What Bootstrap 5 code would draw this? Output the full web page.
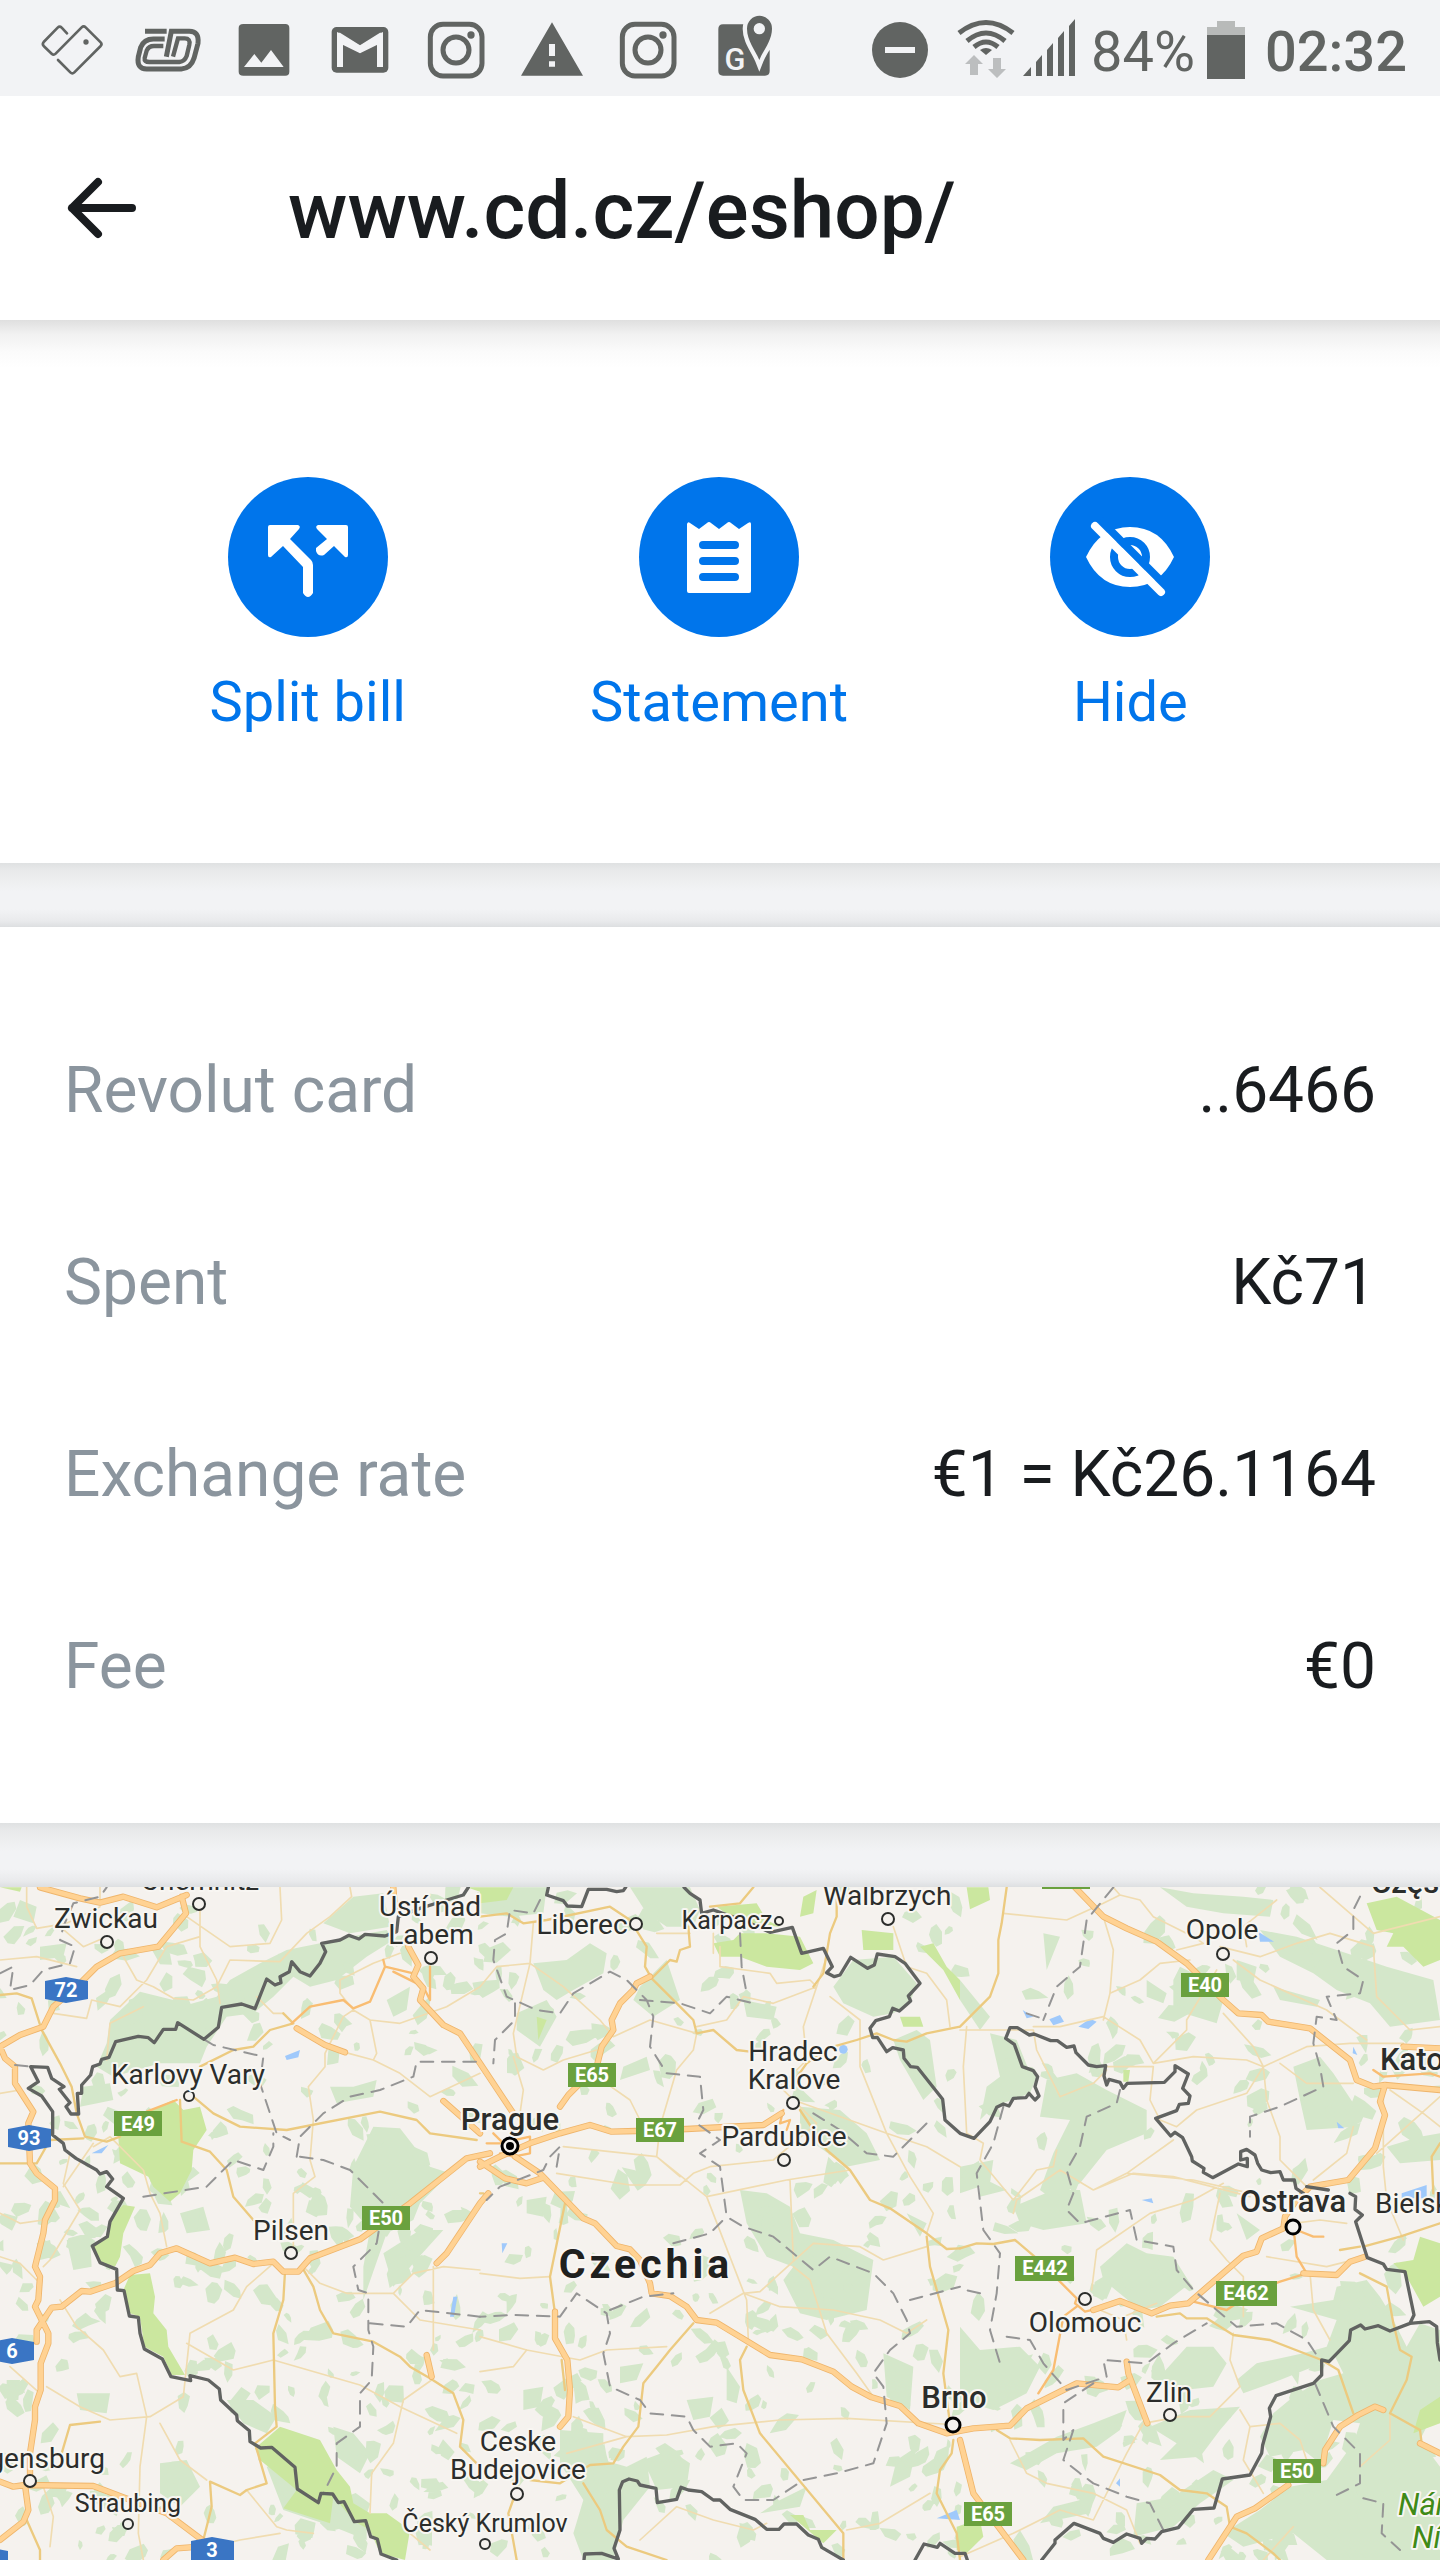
<!DOCTYPE html>
<html lang="en">
<head>
<meta charset="utf-8">
<meta name="viewport" content="width=device-width, initial-scale=1">
<title>www.cd.cz/eshop/</title>
<link href="https://cdn.jsdelivr.net/npm/bootstrap@5.3.0/dist/css/bootstrap.min.css" rel="stylesheet">
<style>
body{font-family:Roboto,"Noto Sans",sans-serif;background:#fff;color:#191c1f;overflow-x:hidden}
svg{display:block;flex-shrink:0}
.status-strip{height:96px;background:#f2f3f5;color:#616462;padding:0 33px 0 24px;font-size:56px;line-height:96px}
.status-strip svg{height:96px}
.status-strip .clock{font-weight:500}
.title-strip{height:224px;padding:0 64px;gap:144px}
.title-strip h1{font-size:80px;line-height:96px;font-weight:500;padding-top:6px}
.back-btn{color:#191c1f;width:80px}
.actions{padding:157px 104px 129px 102px;background:linear-gradient(#dfdfdf,#f1f1f1 14px,#fbfbfb 32px,#fff 48px)}
.act{font-size:56px;line-height:64px;color:#0075eb;gap:33px}
.act:hover{color:#0062c4}
.divider{height:64px;background:linear-gradient(#dfe1e2,#e9eaeb 8px,#f2f3f5 28px,#f2f3f5 46px,#e9eaec 58px,#dddfe1)}
.facts{padding:68px 64px 60px;font-size:64px;line-height:192px}
.facts dt{font-weight:400;color:#8b959e}
.map{width:100%;height:auto;background:#f5f2ee;font-family:Roboto,"Noto Sans",sans-serif}
.map path,.map polyline{stroke-linejoin:round;stroke-linecap:round}
.town text{font-size:28px;fill:#2b2d2b;text-anchor:middle;stroke:#f8f6f2;stroke-width:4px;paint-order:stroke;stroke-linejoin:round}
.town text.minor{font-size:25px}
.town text.city{font-size:31px;font-weight:500}
.town text.land{font-size:41px;font-weight:700;letter-spacing:4px;fill:#1f211f}
.town text.from{text-anchor:start}
.town text.till{text-anchor:end}
.town text.nature{font-size:31px;font-style:italic;fill:#3f8a17;text-anchor:start}
.shield text{font-size:20px;font-weight:700;fill:#fff;text-anchor:middle}
</style>
<script src="https://cdn.jsdelivr.net/npm/bootstrap@5.3.0/dist/js/bootstrap.bundle.min.js"></script>
</head>
<body>
<div class="status-strip d-flex justify-content-between">
  <div class="d-flex">
    <svg width="96" viewBox="0 0 288 288" fill="none" stroke="#616462" stroke-width="8" stroke-linecap="round" stroke-linejoin="round"><path d="M129 100 113 83Q107 77 101 83L59 126Q54 132 59 138L83 161Q89 167 95 161L173 82Q179 76 185 82L230 127Q235 132 230 138L151 217Q145 223 139 217L102 180"/><circle cx="186" cy="126" r="4" fill="#616462"/></svg>
    <svg width="96" viewBox="0 0 288 288" fill="none" stroke="#616462" stroke-width="15"><path d="M75 94H140M134 117H100Q72 117 62 142L55 170Q49 207 80 207H184Q212 206 222 175L234 130Q238 94 208 94H154L139 170"/><path d="M130 138H102Q86 138 80 152L74 174Q72 186 88 186H178Q194 184 200 168L208 134Q212 115 194 115H174L159 170" stroke-width="13"/></svg>
    <svg width="96" viewBox="0 0 288 288"><path fill="#616462" fill-rule="evenodd" d="M82 72H208Q220 72 220 84V215Q220 227 208 227H82Q68 227 68 215V84Q68 72 82 72ZM84 201H203L165 150 136 188 115 162Z"/></svg>
    <svg width="96" viewBox="0 0 288 288"><rect x="59" y="81" width="170" height="137" rx="15" fill="#616462"/><path d="M84 201V112L144 148 204 112V201" fill="none" stroke="#f2f3f5" stroke-width="18"/><path d="M75 98H84L144 136 204 98H213V126L144 160 75 126Z" fill="#f2f3f5"/></svg>
    <svg width="96" viewBox="0 0 288 288" fill="none" stroke="#616462" stroke-width="15"><rect x="67" y="73" width="155" height="155" rx="38"/><circle cx="144" cy="150" r="39"/><circle cx="189" cy="105" r="11" fill="#616462" stroke="none"/></svg>
    <svg width="96" viewBox="0 0 288 288"><path fill="#616462" fill-rule="evenodd" d="M144 67 237 227H51ZM135 132V168H153V132ZM135 184V200H153V184Z"/></svg>
    <svg width="96" viewBox="0 0 288 288" fill="none" stroke="#616462" stroke-width="15"><rect x="67" y="73" width="155" height="155" rx="38"/><circle cx="144" cy="150" r="39"/><circle cx="189" cy="105" r="11" fill="#616462" stroke="none"/></svg>
    <svg width="96" viewBox="0 0 288 288"><path d="M81 73H160L190 180 221 150V213Q221 227 207 227H81Q67 227 67 213V87Q67 73 81 73Z" fill="#616462"/><path d="M190 180C178 150 153 122 153 86A37 38 0 0 1 228 86C228 122 202 150 190 180Z" fill="#616462" stroke="#f2f3f5" stroke-width="26" paint-order="stroke"/><circle cx="190" cy="86" r="17" fill="#f2f3f5"/><text x="117" y="209" font-size="92" font-weight="500" text-anchor="middle" fill="#f2f3f5">G</text></svg>
  </div>
  <div class="d-flex">
    <svg width="58" viewBox="0 0 58 96"><circle cx="29" cy="50" r="28" fill="#616462"/><path d="M14 50H44" stroke="#f2f3f5" stroke-width="6"/></svg>
    <svg class="ms-4" width="62" viewBox="-4 0 62 96" fill="none" stroke="#616462" stroke-width="5"><path d="M2 33Q29 12 56 33M10 41Q29 25 48 41M17 47Q29 37 41 47"/><path d="M23 50Q29 46 35 50L29 55Z" fill="#616462" stroke="none"/><path d="M17 55 26 64H21V75H13V64H8ZM40 78 31 69H36V58H44V69H49Z" fill="#bcbebf" stroke="none"/></svg>
    <svg class="ms-2" width="52" viewBox="0 0 52 96" fill="#616462"><path d="M0 76 8 67V76ZM13 62 19 55V76H13ZM24 50 30 43V76H24ZM35 38 41 31V76H35ZM46 26 52 19V76H46Z"/></svg>
    <span class="ms-3 pt-1">84%</span>
    <svg class="ms-2" width="42" viewBox="-4 0 42 96"><path d="M10 21H28V27H38V36H0V27H10Z" fill="#b8bab9"/><path d="M0 35H38V79H0Z" fill="#616462"/></svg>
    <span class="clock ms-3 ps-1 pt-1">02:32</span>
  </div>
</div>
<header class="title-strip d-flex align-items-center">
  <button type="button" class="back-btn btn p-0 border-0" aria-label="Back"><svg width="80" height="64" viewBox="0 0 80 64" fill="none" stroke="currentColor" stroke-width="8" stroke-linecap="round" stroke-linejoin="round"><path d="M68 32H8M34 6 8 32 34 58"/></svg></button>
  <h1 class="mb-0">www.cd.cz/eshop/</h1>
</header>
<main>
<section class="actions">
  <div class="row g-0">
    <div class="col-4 d-flex justify-content-center"><button type="button" class="act btn p-0 border-0 d-flex flex-column align-items-center">
      <svg width="160" height="160" viewBox="0 0 160 160"><circle cx="80" cy="80" r="80" fill="#0075eb"/><path d="M42 48H70Q73 49 71 52L62 62 83 83Q85 85 85 88V116Q80 124 75 116V90L55 69 43 80Q40 81 40 78V50Q40 48 42 48ZM90 48H118Q120 48 120 50V78Q120 81 117 80L106 69 96 78Q90 80 88 74V71L99 62 89 52Q87 49 90 48Z" fill="#fff"/></svg>
      <span>Split bill</span></button></div>
    <div class="col-4 d-flex justify-content-center"><button type="button" class="act btn p-0 border-0 d-flex flex-column align-items-center">
      <svg width="160" height="160" viewBox="0 0 160 160"><circle cx="80" cy="80" r="80" fill="#0075eb"/><path d="M48 47Q49 44 51 46L60 52 68 46Q70 44 72 46L80 52 88 46Q90 44 92 46L100 52 109 46Q112 44 112 47V114Q112 116 110 116H50Q48 116 48 114Z" fill="#fff"/><path d="M64 68H96M64 84H96M64 100H96" stroke="#0075eb" stroke-width="8" stroke-linecap="round"/></svg>
      <span>Statement</span></button></div>
    <div class="col-4 d-flex justify-content-center"><button type="button" class="act btn p-0 border-0 d-flex flex-column align-items-center">
      <svg width="160" height="160" viewBox="0 0 160 160"><circle cx="80" cy="80" r="80" fill="#0075eb"/><path d="M36 80Q50 50 80 50T124 80Q110 110 80 110T36 80Z" fill="#fff"/><circle cx="80" cy="80" r="16" fill="#fff" stroke="#0075eb" stroke-width="8"/><path d="M50 43 118 111" stroke="#0075eb" stroke-width="8"/><path d="M45 49 111 115" stroke="#fff" stroke-width="8" stroke-linecap="round"/></svg>
      <span>Hide</span></button></div>
  </div>
</section>
<div class="divider"></div>
<dl class="facts m-0">
  <div class="d-flex justify-content-between"><dt>Revolut card</dt><dd class="m-0">..6466</dd></div>
  <div class="d-flex justify-content-between"><dt>Spent</dt><dd class="m-0">Kč71</dd></div>
  <div class="d-flex justify-content-between"><dt>Exchange rate</dt><dd class="m-0">€1 = Kč26.1164</dd></div>
  <div class="d-flex justify-content-between"><dt>Fee</dt><dd class="m-0">€0</dd></div>
</dl>
<div class="divider"></div>
<svg class="map" viewBox="0 0 1440 673" role="img" aria-label="Map of Czechia">
  <defs>
    <g id="hw">
      <path d="M120 262 240 295 300 308 370 290 470 322 560 285M545 290 558 340 475 440 360 460 290 500 230 560 160 620 130 680 60 705 0 740 15 775 45 800 45 850 100 935 85 970 90 1090 110 1120 165 1165 165 1200 135 1260 130 1300 105 1400 120 1430 115 1500 105 1520 145 1600 145 1630 122 1690 122 1770 105 1820 105 1860 90 1960 90 2050M110 1625 110 1590 130 1560 155 1523 185 1520 245 1473 270 1475 345 1450 400 1413 450 1395 480 1360 530 1345 630 1390 705 1373 760 1392 820 1385 850 1415 895 1415 930 1375 1080 1318 1230 1210 1400 1075 1470 1060M1310 1390 1340 1360 1400 1270 1440 1210 1465 1180M0 2045 40 2060 75 2055 280 2058 365 2090 500 2140 620 2230M75 2055 85 2130 70 2165 0 2220M490 2280 530 2245 600 2240M1280 1665 1295 1730M890 685 975 735 1035 757M1180 262 1185 330M1225 440 1255 495 1240 530 1270 565 1260 600 1330 675 1380 700 1440 790 1540 940M1330 903 1440 1000"/>
      <g transform="translate(1440)"><path d="M0 1085 75 1135 140 1150 185 1135M105 1070 180 1120 310 1255 345 1270 410 1338 450 1348 480 1380 510 1450 515 1480 570 1488 620 1520 650 1560 710 1568 870 1665 965 1678 1060 1715 1115 1760 1175 1792 1260 1818 1315 1870 1400 1900 1480 1885 1590 1877 1640 1825 1790 1750 1915 1762 1950 1740M0 1100 60 1070 150 1030 240 1000 330 975 395 995 470 993 620 987 850 975 905 940M240 920 265 885 350 800 365 740 400 690 395 660 420 610 460 570 470 550 510 530M225 1535 225 1615 262 1680 270 1770 265 1850 240 1880"/></g>
      <g transform="translate(2880)"><path d="M345 262 430 350 500 385 590 425 680 490 790 600 835 640 905 645 925 665 1050 685 1170 780 1190 840 1240 860 1275 855 1440 870M1330 740 1440 745M1275 855 1260 905 1275 945 1245 1045 1165 1140 1050 1160 1010 1200 975 1250 970 1285 905 1315 890 1355 850 1367 685 1510 630 1517 575 1540 480 1503 400 1530M500 1685 505 1720 562 1870M0 1920 40 2080 190 2280M1030 1420 1130 1425 1170 1385 1215 1370M745 2280 830 2150 885 2125 985 2055M1090 1990 1095 1950 1140 1880 1195 1845 1245 1820 1270 1830M1380 1930 1440 1960"/></g>
    </g>
  </defs>
  <g transform="translate(0 -87) scale(.333333)" fill="none">
    <g id="woods" fill="#d4e7ca">
      <path d="M330 660 420 575 520 600 560 615 650 590 690 540 780 490 860 450 960 430 1050 410 1160 390 1180 420 1100 470 1010 540 930 560 880 530 820 590 760 640 680 650 620 740 600 790 480 790 340 830 290 800 320 730ZM1060 290 1150 280 1170 380 1050 400 970 370ZM250 860 330 850 340 900 240 920ZM1060 860 1130 840 1120 890 1010 910 990 860ZM1160 600 1230 560 1220 630 1180 650ZM60 300 110 320 100 370 40 350ZM120 440 200 430 190 470 120 480Z"/>
      <path d="M1060 1100 1120 980 1200 985 1290 1100 1350 1120 1260 1210 1240 1260 1160 1300 1090 1500 1090 1400 1110 1290 1050 1220ZM1150 1360 1260 1290 1330 1290 1240 1390 1180 1460ZM200 1320 270 1310 275 1400 220 1410ZM540 1240 610 1220 630 1290 560 1300ZM680 1800 760 1800 830 1850 800 1900 730 1870ZM800 2000 860 1990 900 2060 1000 2080 1100 2150 1100 2220 1000 2180 850 2130ZM1000 1880 1060 1900 1110 1960 1080 2020 1010 1970ZM480 1990 560 1980 600 2060 540 2120 480 2080ZM20 1740 60 1740 55 1800 20 1800ZM230 1780 330 1780 320 1840 240 1830ZM110 1330 150 1320 160 1370 120 1380Z"/>
      <g transform="translate(1440)"><path d="M100 262 200 262 190 340 90 350 0 340 0 300ZM450 262 630 262 660 330 640 380 560 380 500 340ZM160 490 260 480 330 430 380 460 370 520 280 570 230 600 190 570ZM480 560 560 480 580 540 600 600 520 650 460 600ZM110 640 200 600 230 650 180 740 110 690ZM1060 560 1120 480 1240 470 1310 550 1290 610 1240 640 1180 650 1090 610ZM1240 720 1310 690 1350 720 1370 860 1330 900 1260 780ZM430 800 500 770 510 810 420 840ZM960 920 1080 930 1160 1000 1200 1080 1100 1100 960 1000ZM780 1170 860 1180 930 1220 960 1300 1060 1320 1180 1380 1160 1530 1040 1560 960 1540 910 1440 940 1400 860 1370 800 1270ZM790 600 890 620 880 660 800 650ZM240 1890 370 1900 370 1980 440 2000 500 1970 510 2060 430 2160 400 2280 310 2280 280 2200 310 2100 240 1990ZM490 1980 570 1950 630 1990 620 2060 530 2070ZM740 1700 780 1760 770 1810 740 1800ZM620 1800 700 1790 690 1850 640 1860ZM900 2100 980 2060 960 2120 840 2140ZM1210 1660 1300 1700 1290 1830 1220 1790ZM1250 1980 1310 1940 1290 2030 1230 2060ZM140 1200 200 1190 190 1250 140 1240ZM130 1770 190 1760 180 1820 130 1830ZM420 1700 490 1690 470 1740 420 1750ZM1280 1240 1340 1270 1320 1310Z"/></g>
      <g transform="translate(2880)"><path d="M600 262 700 280 850 290 940 300 930 350 790 340 680 320ZM900 390 1010 410 1160 460 1280 500 1420 540 1440 660 1290 680 1230 610 1130 570 1060 520 960 470ZM660 500 720 530 790 600 770 670 640 630 640 540ZM560 540 620 580 610 610 560 590ZM830 480 890 500 880 550 830 540ZM0 540 90 650 60 690 0 600ZM90 700 170 720 210 820 230 830 210 880 100 920 60 960 80 860 120 830ZM260 840 350 820 440 870 560 930 560 1000 440 1050 360 1150 280 1200 240 1170 280 1060 330 960 240 950ZM1000 800 1080 770 1120 820 1200 940 1190 980 1040 990 1020 900ZM250 400 300 410 260 510ZM940 560 1080 600 1070 620 960 600ZM1280 1040 1380 1010 1440 1000 1440 1080 1320 1090ZM0 1100 100 1080 90 1150 0 1180ZM310 1100 380 1090 340 1190ZM0 1580 60 1650 180 1640 240 1700 200 1780 100 1830 0 1800ZM160 1220 280 1170 360 1170 380 1270 250 1290 180 1270ZM420 1400 500 1330 560 1360 640 1370 690 1450 600 1520 540 1530 430 1440ZM1130 1460 1220 1440 1260 1490 1290 1540 1340 1640 1380 1570 1440 1590 1440 1800 1380 1920 1440 2000 1440 2280 1100 2280 1000 2200 850 2240 790 2200 900 2130 990 2060 1100 2040 1180 1930 1200 1870 1120 1860 1080 1990 1030 1950 930 1970 900 1910 940 1840 1000 1790 1080 1740 1150 1720 1120 1660 1170 1620 1110 1680 1060 1700 960 1740 850 1780 830 1740 890 1690 1030 1660 1100 1640 1130 1560 990 1520 1120 1500ZM590 1740 680 1640 760 1640 800 1690 760 1760 670 1770ZM570 1880 690 1830 840 1820 780 1890 720 1970 600 1980 650 1930ZM150 1990 290 1910 400 1870 500 1830 480 1890 410 1940 290 1960 200 2010ZM530 2110 640 2090 760 2010 820 2040 720 2110 640 2180 520 2210ZM280 2120 400 2090 390 2140 240 2170ZM830 1240 900 1290 860 1320ZM60 1130 140 1170 60 1190Z"/></g>
    </g>
    <g fill="#cbe79f">
      <path d="M355 1010 455 930 520 900 550 930 600 920 620 990 580 1050 575 1110 540 1180 510 1205 460 1160 445 1130 360 1090ZM0 262 65 262 60 275ZM370 1215 405 1220 370 1300 360 1370 345 1400 300 1385 280 1340 320 1310 335 1250ZM390 1425 450 1420 465 1490 460 1540 500 1590 505 1640 555 1725 515 1725 490 1670 433 1640 420 1550 390 1540 370 1470ZM765 1945 840 1880 960 1920 1010 2010 1050 2060 1060 2110 1110 2140 1160 2140 1230 2190 1215 2280 1140 2260 1110 2190 1065 2165 1000 2090 990 2170 850 2125 890 2070 780 1980ZM1400 262 1440 262 1440 275Z"/>
      <g transform="translate(1440)"><path d="M0 262 100 262 80 300 0 310ZM700 430 760 420 780 400 860 400 960 410 1000 490 960 510 860 500 780 470 720 470ZM710 320 830 310 860 360 900 380 780 370ZM970 290 1010 270 1000 340 960 350ZM1145 390 1240 400 1240 450 1150 450ZM1320 440 1360 430 1400 500 1440 540 1440 600 1390 510ZM170 650 200 660 175 720ZM1260 650 1320 650 1330 680 1270 680ZM930 2145 970 2145 990 2190 1070 2190 1030 2230ZM1430 2180 1500 2160 1510 2210 1460 2260 1430 2250Z"/></g>
      <g transform="translate(2880)"><path d="M20 262 85 262 90 300 30 328ZM1220 310 1310 290 1440 360 1440 480 1390 500 1330 440 1280 440 1300 400 1250 390ZM490 810 510 810 505 845 490 845ZM1380 1310 1440 1330 1440 1490 1390 1520 1340 1430 1300 1390 1360 1380ZM1380 1830 1440 1790 1440 1870 1360 1900Z"/></g>
    </g>
    <g fill="#9fc9fb"><path d="M855 768 900 750 895 772 860 780ZM275 1060 325 1035 305 1060ZM1350 1550 1360 1490 1372 1490 1362 1550Z"/><circle cx="2530" cy="748" r="13"/><path d="M3148 658 3180 645 3192 665 3160 676ZM3235 680 3270 656 3290 665 3265 687ZM3775 395 3822 425 3780 425ZM3068 630 3100 650 3080 655ZM4010 965 4033 985 4015 985ZM4205 1180 4280 1155 4280 1195 4205 1195ZM4060 740 4072 765 4058 760ZM3425 1200 3455 1195 3460 1210ZM3348 2050 3360 2035 3360 2060ZM2810 2155 2870 2130 2880 2160ZM1505 1330 1522 1330 1507 1360Z"/></g>
    <g stroke="#f0dcb0" stroke-width="5">
      <path d="M80 262 80 320 110 385 200 370 300 320M300 262 300 300M180 380 250 440 320 410M0 480 110 470 230 500M370 470 410 540 460 560 520 595 580 600 650 560 690 480 840 485 920 400 990 350 1055 290 1050 262M600 330 600 440 650 540 660 610M840 262 845 360 810 430 690 440 560 350M170 600 160 640 260 655 275 600 360 620 440 540 500 440 600 410M320 780 330 670 430 620M1200 460 1120 490 1020 540 1020 580 1060 630 1030 650 975 760 975 800 925 860 940 960 930 1080 945 1130 880 1180 880 1340M1060 630 1110 660 1130 760 1120 780 1035 757M1110 660 1200 670 1340 620 1440 560M1120 780 1200 820 1290 890 1440 820M770 590 820 640 850 640M280 1040 330 1010 430 1110 450 1180 480 1240 500 1340M0 880 60 870M190 1160 280 1030"/>
      <path d="M210 1060 190 1150 240 1230 150 1380 130 1400M0 1240 60 1270 130 1260M0 1370 60 1390 110 1440M180 1500 230 1580 310 1650 360 1730 410 1720 440 1850 420 2000 415 2200 430 2280M140 1760 240 1820 330 1860 450 1850 550 1790 570 1600 700 1530 740 1460 820 1390M560 1630 700 1710 820 1680 1080 1755 1200 1820 1370 1900M910 1400 960 1450 1040 1480 1180 1480 1240 1420 1330 1400 1440 1410M1180 1480 1260 1560 1440 1590M1300 1400 1300 1650M1295 1740 1210 1800 1180 1930 1115 2020 1110 2140M1230 2200 1290 2250M480 1870 540 1980 620 2040M740 2070 830 2180 860 2190 940 2200M640 2240 720 2220 840 2200M130 2060 160 2150 150 2240M30 1700 120 1780"/>
      <g transform="translate(1440)"><path d="M0 560 50 500 150 490 250 560 360 660 400 710 510 660 650 700M160 370 150 490 100 700 110 770 190 810 250 780 350 750M350 830 450 900 480 960M100 770 130 870 120 940M650 700 640 750 590 810 540 980 530 1070 600 1130M250 1040 530 1070 680 1190 920 1140 1110 1110M230 1120 450 1155 600 1155 640 1120 690 1100 880 1080 1010 970 940 900M680 1190 800 1500 805 1620M720 440 720 500 870 520 890 550 990 540 1010 560 880 610 790 590 740 660 650 680M1010 560 970 680 980 780 900 860 930 890M1010 560 1040 470M1050 590 1140 660 1140 800 1220 1000 1290 1130 1360 1240 1340 1300M940 900 1220 1000 1340 1040 1440 1100M1240 380 1280 500 1340 520 1400 600 1410 680M530 400 630 400M700 460 700 400M0 1420 120 1435 210 1430M0 1610 140 1650 300 1680 380 1650 560 1640M0 1715 100 1700 140 1650M280 1850 440 1910 560 1905 700 1880 900 1860 1100 1855 1440 1875M690 1540 790 1480 840 1475 900 1420 1000 1330 1140 1340 1210 1380 1340 1340M790 1480 900 1520 1060 1530 1200 1560 1280 1600 1340 1560M940 1400 990 1440 1040 1600 1130 1720 1180 1790M480 2220 590 2120 700 2160 820 2190 860 2170M1100 2190 1200 2170 1350 2080M930 1140 940 1380M440 1910 260 1960"/></g>
      <g transform="translate(2880)"><path d="M130 340 320 360 430 310 480 285 540 300 580 350 700 410 730 430 650 450M480 285 460 262M430 350 460 450 450 580 430 660M450 580 540 540 600 490 690 480M0 690 120 690 220 690 230 750 300 890M20 680 10 800 20 1000 70 1030 60 1080 160 1200 230 1110 280 1100 290 1050M220 680 300 680 430 650 540 720 580 790 700 770 860 780 910 800 1040 740 1170 730 1330 730M580 790 680 690 680 660 770 510M440 800 580 800 570 900 600 960 650 980 710 930 860 880 910 800 880 740 790 640M910 800 920 900 960 1010 960 1080 1040 1160M300 890 400 850 440 810M960 790 1040 850 1180 850M640 1020 500 1120 400 1170 300 1110M500 1120 700 1140 870 1180M820 480 900 540 1100 630 1220 720M780 440 900 470 1010 430 1110 400 1240 440 1250 590 1350 690 1440 680M1080 262 1240 400 1440 350M860 440 850 380 950 300M1290 870 1390 940 1440 980M1180 980 1160 1060 1060 1140M1270 860 1270 1100 1280 1200 1330 1320M1440 890 1250 1060M160 1240 170 1200 300 1110 400 1170 520 1120 640 1130 870 1190M395 1470 410 1350 570 1240 700 1200 790 1150M780 1180 750 1320 800 1380 850 1430 850 1550M1000 1270 1080 1260 1160 1270M500 1620 490 1560 420 1530M490 1550 590 1510M500 1960 550 1870 660 1850 750 1850 840 1760 810 1680 820 1600M840 1830 870 1880 850 1980 910 2080M870 1880 960 1870 1020 1920 1050 2010M150 1920 200 2020 260 2050 400 2080 500 2130 540 2230M0 2270 160 2200 300 2130 400 2160 500 1960M1290 1840 1290 1920 1200 2000M910 2280 1000 2180M1220 1370 1100 1400 920 1370M1050 1420 1060 1530 1110 1620"/></g>
    </g>
    <g stroke="#ecca7f" stroke-width="7">
      <path d="M0 585 50 580 95 595 125 690 180 790 215 860 230 940 255 1010 320 1025 360 1010M850 640 880 670 810 690 760 740 700 750 600 800M580 890 640 940 720 980 860 990 1140 935M1140 935 1250 960 1290 1000 1430 1020M540 900 545 1025 630 1055 680 1110 700 1190 760 1260M0 1090 110 1090 150 1020 250 1015M855 1415 850 1500 820 1600 825 1820 830 1880 765 1930 800 2050 740 2070 720 2085 630 2045 635 2120 610 2220M905 1400 940 1460 960 1530 1000 1600 1120 1625 1200 1670 1230 1700 1290 1735 1360 1780 1390 1860 1380 1940 1430 1990M185 1960 210 1875 300 1865M1440 1180 1450 1180M80 2160 120 2250 120 2280"/>
      <g transform="translate(1440)"><path d="M0 350 80 340 130 370 200 360 390 320 450 360 500 440 495 500 515 535M515 535 570 480 590 485 600 450 630 440 625 380M515 535 600 620 640 660 650 700 700 690 770 750 810 755M820 262 780 310 690 320M1070 300 1070 350 1050 400 1030 520 1000 560M1060 740 1130 720 1190 700 1240 720 1280 725 1340 700 1440 680M1440 680 1530 590 1555 520 1555 420 1565 370 1580 262M930 860 980 790 1050 740M960 930 1040 1050 1110 1110 1170 1200 1230 1225 1340 1300 1400 1347 1440 1345M1340 1310 1350 1400 1405 1590 1390 1720 1410 1870M255 1210 210 1430 225 1540M640 1570 570 1650 530 1700 490 1750 475 1880 430 1940 400 1990 330 1995 240 2050 150 2040M800 1640 780 1680 790 1770 840 1900 1090 2200 1090 2280M310 2050 360 2130 380 2190 440 2240 560 2280M245 1680 255 1770M110 2070 85 2140 110 2280M1420 1920 1415 1960 1380 2010 1370 2080 1430 2200 1440 2280"/></g>
      <g transform="translate(2880)"><path d="M0 1345 50 1330 100 1332 165 1320 230 1375M590 1550 660 1540 680 1555 740 1555 820 1605 930 1620 1085 1680 1135 1710 1180 1840M1200 1420 1280 1460 1300 1570 1320 1650 1355 1670 1340 1740 1290 1840 1380 1890 1385 1930M110 1890 150 1915 240 1920 370 1915 430 1970 600 2025 660 2070 740 2080 800 2120 810 2180M810 2180 860 2200 940 2260 960 2280M1440 1030 1415 1070 1420 1180M1210 1340 1320 1310 1440 1270M1200 1340 1140 1350"/></g>
    </g>
    <g stroke="#f9bd72" stroke-width="7">
      <path d="M440 935 530 900M875 670 930 620 1030 600 1060 625 1110 605 1155 500 1150 480M1155 500 1240 520M1180 515 1270 560 1290 600 1290 500"/>
      <path d="M1460 1030H1500L1590 1010V1060L1540 1070 1500 1060M1480 1000 1530 1050"/>
      <path d="M2350 930 2340 970 2370 960 2360 990"/>
      <g transform="translate(2880)"><path d="M230 1375 350 1495 345 1510 375 1535 415 1525M235 1780 280 1710 310 1550 350 1520M1000 1280 1010 1370 1040 1420 960 1445 890 1470 800 1530 700 1505M1010 1290 1060 1310 1090 1310M1240 810 1270 830 1410 820 1440 830"/></g>
    </g>
    <use href="#hw" stroke="#efb56b" stroke-width="19"/>
    <use href="#hw" stroke="#ffd293" stroke-width="14"/>
    <g stroke="#959595" stroke-width="6" stroke-dasharray="38 26">
      <path d="M0 520 40 500 30 570 90 555 130 510 210 490 225 440 180 420 190 380 220 310 300 290 320 262M45 795 92 800M612 718 640 735 790 770 780 850 820 970 830 1000 870 1020M430 1190 620 1160 700 1080 790 1110 820 1040 820 1000M900 1070 970 1080 1050 1110 1110 1170 1150 1210 1130 1330 1060 1400 1075 1470 1105 1480 1105 1590 1120 1640 1115 1740 1080 1780 1080 1880 1010 1930 1010 2000 970 2080M890 1070 900 1010 970 940 1050 890 1140 870 1240 830 1250 785 1440 785M1110 1570 1220 1580 1260 1530 1440 1550"/>
      <g transform="translate(1440)"><path d="M180 300 160 340 90 330 80 400 45 420 40 480 80 590 170 630 240 640 280 580 390 515 440 540 500 600 520 650 510 740 560 820 660 830 670 930 650 970 720 1020 660 1060 720 1100 740 1250 790 1280 880 1310 1000 1410 1050 1370 1180 1420 1240 1480 1280 1560 1290 1600 1230 1650 1180 1720 1210 1760 1220 1870 1180 1990 1070 2020 970 2040 880 2100 790 2100 760 2060 800 1960 770 1930 690 1940 640 1890 620 1850 510 1840 480 1800 390 1760 370 1660 390 1600 380 1540 290 1480 240 1550 100 1545 0 1550M390 1530 490 1490 580 1480M580 1330 690 1300 740 1250M480 600 600 610 690 640 740 590 820 610M780 400 785 500 800 580M105 610 105 660 45 720 40 790M230 1100 240 1040 210 1070 190 1110 60 1160 20 1200M1000 940 1080 990 1160 1060 1240 1070 1350 960M1290 1500 1440 1460"/></g>
      <g transform="translate(2880)"><path d="M460 262 380 360 360 500 290 560 250 660M200 640 260 660M1200 290 1180 330 1180 390 1130 430 1150 500 1210 540 1200 580 1100 590 1130 660 1070 650 1060 730 1080 800 1090 860 960 920 870 950 870 1010M480 870 470 910 380 950 360 1040 320 1110 340 1180 320 1230 360 1270 510 1230 530 1320 640 1340 650 1410 700 1470 770 1530 830 1580 950 1570 1040 1620 1080 1680M1065 1750 1120 1880 1200 1960 1200 2050 1120 2090M1210 2095 1270 2110 1265 2200 1320 2250M130 920 100 1030 50 1120 70 1290 120 1360 110 1480 90 1590 120 1690M60 1480 0 1466M140 1610 210 1620 250 1690 320 1770 440 1730 430 1680 560 1690 640 1630 740 1570M400 1750 310 1810 310 1920 340 1890 310 1980 360 2020 400 2050 500 2090 570 2110 610 2190"/></g>
    </g>
    <g stroke="#616361" stroke-width="10">
      <path d="M1405 262 1390 285 1340 300 1260 325 1195 350 1190 395 1155 408 1095 403 1077 417 1047 406 1020 420 965 430 977 455 960 490 930 528 900 515 875 485 868 515 840 530 843 548 825 555 800 537 765 626 725 612 665 622 655 682 612 718 533 668 527 688 490 688 463 728 445 713 415 709 347 725 327 772 305 778 300 792 278 800 272 825 245 855 245 880 232 880 236 942 213 942 198 920 210 908 178 868 192 860 155 835 143 802 92 800 115 845 85 865 125 888 158 935 158 1005 190 1030 195 1050 228 1075 290 1110 300 1122 320 1115 338 1137 320 1160 370 1195 330 1265 322 1310 277 1338 300 1388 350 1408 352 1470 372 1472 388 1548 415 1552 420 1600 433 1647 487 1677 513 1730 572 1742 570 1727 625 1740 658 1767 662 1800 710 1845 712 1862 748 1892 750 1925 782 1944 815 1942 885 2002 892 2067 955 2108 963 2080 998 2082 1015 2108 1032 2105 1063 2165 1097 2162 1112 2210 1132 2217 1143 2262 1190 2280"/>
      <g transform="translate(1440)"><path d="M205 262 200 285 250 302 262 318 305 320 325 268 380 268 410 275 430 272 437 262M612 262 630 280 660 300 665 340 700 330 800 365 870 397 937 382 965 460 1030 445 1057 500 1040 518 1063 530 1080 525 1112 472 1163 505 1183 495 1192 462 1245 470 1275 490 1320 550 1285 588 1292 603 1258 633 1238 625 1228 650 1187 662 1170 685 1178 713 1192 712 1220 755 1238 743 1270 750 1272 775 1292 800 1312 802 1388 898 1395 960 1440 1000 1482 1015 1530 965 1550 922 1570 912 1587 918 1600 895 1638 893 1647 880 1665 900 1677 888 1665 860 1673 830 1660 812 1627 800 1603 733 1577 715 1590 683 1612 683 1648 705 1662 702 1712 722 1732 722 1760 742 1782 738 1788 758 1825 795 1850 800 1877 797 1872 828 1880 855 1887 838 1920 847 1930 865 1942 850 2053 847 2085 815 2085 797 2125 822 2108 865 2130 888 2125 910 2098 913 2090 932 2027 955 2072 1008 2085 997 2108 1013 2135 1070 2137 1083 2172 1105 2170 1117 2198 1133 2275 1092 2302 1100 2302 1075 2282 1080 2282 1055 2300 1048 2325 1065 2333 1090 2345 1110 2372 1118 2400 1115 2410 1140 2443 1140 2448 1165 2470 1180M312 2280 314 2262 365 2260 415 2277 402 2245 420 2190 418 2070 428 2045 447 2037 472 2043 480 2055 528 2065 532 2108 590 2098 603 2062 625 2070 665 2075 700 2100 720 2100 750 2128 825 2158 860 2188 897 2188 912 2172 950 2172 985 2205 1015 2218 1025 2242 1090 2280M1305 2280 1332 2232 1372 2242 1380 2230 1425 2260 1455 2260 1462 2280"/></g>
      <g transform="translate(2880)"><path d="M245 2280 285 2230 285 2220 342 2170 420 2200 430 2215 460 2227 500 2202 540 2215 545 2230 560 2215 585 2217 605 2195 655 2183 700 2128 762 2124 787 2037 870 2025 905 1960 908 1935 932 1850 928 1825 948 1787 1060 1750 1085 1725 1085 1680 1107 1685 1168 1622 1172 1590 1202 1575 1215 1587 1255 1577 1290 1593 1350 1570 1362 1545 1335 1415 1280 1408 1270 1392 1222 1373 1187 1265 1207 1245 1185 1228 1187 1190 1170 1180M1105 1170 1040 1160M1350 1570 1408 1565 1430 1580 1432 1628 1440 1680"/></g>
    </g>
  </g>
  <g class="marks" fill="#f5f2ee" stroke="#2b2d2b" stroke-width="2">
    <circle cx="199" cy="17" r="6"/><circle cx="107" cy="55" r="6"/><circle cx="431" cy="71" r="6"/><circle cx="189" cy="209" r="5"/><circle cx="636" cy="37" r="6"/><circle cx="779" cy="34" r="4"/><circle cx="888" cy="32" r="6"/><circle cx="793" cy="216" r="6"/><circle cx="784" cy="273" r="6"/><circle cx="1223" cy="67" r="6"/><circle cx="291" cy="366" r="6"/><circle cx="30" cy="594" r="6"/><circle cx="128" cy="637" r="5"/><circle cx="517" cy="607" r="6"/><circle cx="485" cy="657" r="5"/><circle cx="1085" cy="412" r="6"/><circle cx="1170" cy="528" r="6"/>
    <circle cx="1293" cy="340" r="7" stroke="#000" stroke-width="3"/><circle cx="953" cy="538" r="7" stroke="#000" stroke-width="3"/><circle cx="510" cy="259" r="8" stroke="#000" stroke-width="3"/><circle cx="510" cy="259" r="4" fill="#000" stroke="none"/>
  </g>
  <g class="town">
    <text x="200" y="3">Chemnitz</text><text x="106" y="41">Zwickau</text><text x="430" y="29">Ústí nad</text><text x="431" y="57">Labem</text><text x="188" y="197">Karlovy Vary</text><text x="582" y="47">Liberec</text><text class="minor" x="727" y="42">Karpacz</text><text x="887" y="18">Walbrzych</text><text x="793" y="174">Hradec</text><text x="794" y="202">Kralove</text><text x="784" y="259">Pardubice</text><text class="city" x="510" y="243">Prague</text><text x="1222" y="52">Opole</text><text class="city from" x="1380" y="183">Katowice</text><text class="city from" x="1371" y="6">Częstochowa</text><text x="291" y="353">Pilsen</text><text class="till" x="105" y="581">Regensburg</text><text class="minor" x="128" y="625">Straubing</text><text class="minor" x="485" y="645">Český Krumlov</text><text x="518" y="564">Ceske</text><text x="518" y="592">Budejovice</text><text class="land" x="646" y="391">Czechia</text><text class="city" x="954" y="521">Brno</text><text x="1085" y="445">Olomouc</text><text x="1169" y="515">Zlin</text><text class="city" x="1293" y="325">Ostrava</text><text class="from" x="1375" y="326">Bielsko-Biała</text><text class="nature" x="1398" y="628">Národný park</text><text class="nature" x="1412" y="661">Nízke Tatry</text>
  </g>
  <g class="shield">
    <path fill="#6aa13e" d="M114 224h48v25h-48zM568 176h48v24h-48zM636 231h48v24h-48zM1181 86h48v24h-48zM1042 -22h48v24h-48zM362 319h48v24h-48zM1015 369h59v25h-59zM1216 394h61v25h-61zM1273 572h48v24h-48zM964 615h48v24h-48z"/>
    <path fill="#3a75c4" d="M45 94 66 90 88 94V112L66 116 45 112ZM8 242 29 238 51 242V260L29 264 8 260ZM-9 455 12 451 34 455V473L12 477 -9 473ZM191 654 212 650 234 654V676H191ZM-35 664 -14 660 8 664V680H-35Z"/>
    <text x="138" y="244">E49</text><text x="592" y="195">E65</text><text x="660" y="250">E67</text><text x="1205" y="105">E40</text><text x="386" y="338">E50</text><text x="1045" y="388">E442</text><text x="1246" y="413">E462</text><text x="1297" y="591">E50</text><text x="988" y="634">E65</text><text x="66" y="110">72</text><text x="29" y="258">93</text><text x="12" y="471">6</text><text x="212" y="670">3</text>
  </g>
</svg>
</main>
<script>
/* Scatter small groves over the map: [left, top, width, height, count] */
(function(){
  var seed=11;
  function rnd(){seed=(seed*16807)%2147483647;return seed/2147483647}
  var zones=[[0,262,1440,1000,130],[0,1200,1440,1080,190],[1440,262,1440,900,100],[1440,1160,1440,1120,170],[2880,262,1440,900,80],[2880,1160,1440,1120,130]];
  var d='';
  zones.forEach(function(z){
    for(var i=0;i<z[4];i++){
      var x=z[0]+rnd()*z[2],y=z[1]+rnd()*z[3],r=12+rnd()*24,n=5+Math.floor(rnd()*3),tilt=rnd()*3;
      for(var k=0;k<n;k++){
        var a=k/n*6.283,q=r*(.5+rnd()*.7),u=Math.cos(a)*q*1.4,v=Math.sin(a)*q*.8;
        d+=(k?'L':'M')+Math.round(x+u*Math.cos(tilt)-v*Math.sin(tilt))+' '+Math.round(y+u*Math.sin(tilt)+v*Math.cos(tilt));
      }
      d+='Z';
    }
  });
  var p=document.createElementNS('http://www.w3.org/2000/svg','path');
  p.setAttribute('d',d);
  document.getElementById('woods').appendChild(p);
})();
</script>
</body>
</html>
